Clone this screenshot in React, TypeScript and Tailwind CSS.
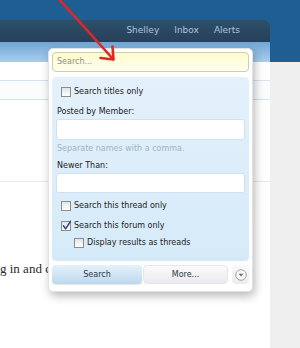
function Checkbox({ checked = false }: { checked?: boolean }) {
  return (
    <span className="relative inline-block h-[10px] w-[10px] shrink-0 border border-[#8c8c8c] bg-gradient-to-b from-[#e4e4e4] to-white">
      {checked && (
        <svg viewBox="0 0 10 10" className="absolute -left-px -top-[2px] h-[11px] w-[11px]">
          <path d="M2.2 5.2 L4.2 8 L8.6 1.2" fill="none" stroke="#2b3f7a" strokeWidth={1.3} strokeLinecap="round" strokeLinejoin="round" />
        </svg>
      )}
    </span>
  )
}

function CheckRow({ label, checked, indent }: { label: string; checked?: boolean; indent?: boolean }) {
  return (
    <label className={`flex h-[12px] items-center gap-[3px] text-[8px] leading-[12px] text-[#222] ${indent ? 'pl-[18px]' : 'pl-[5px]'}`}>
      <Checkbox checked={checked} />
      <span>{label}</span>
    </label>
  )
}

export default function App() {
  return (
    <div className="relative h-[348px] w-[300px] overflow-hidden bg-white font-['DejaVu_Sans',sans-serif]">
      {/* header */}
      <div className="h-[62px] bg-[#1e5e93] pt-[20px]">
        <div className="w-[270px] overflow-hidden rounded-tr-[7px]">
          <nav className="flex h-[22px] items-center justify-end gap-[15px] bg-gradient-to-b from-[#2f4f69] to-[#25405a] pr-[30px] text-[9px] text-[#a9c6df]">
            <span>Shelley</span>
            <span>Inbox</span>
            <span>Alerts</span>
          </nav>
          <div className="h-[20px] bg-gradient-to-b from-[#6fa6d4] to-[#aacdea]" />
        </div>
      </div>

      {/* body */}
      <div className="flex h-[286px]">
        <main className="w-[270px]">
          <div className="h-[18px]" />
          <div className="h-[20px] border-y border-[#d6e2ed] bg-[#fafcfe]" />
          <div className="h-[82px] border-b border-[#e3eaf0]" />
          <p className="whitespace-nowrap pt-[80px] font-['Liberation_Serif',serif] text-[13px] leading-[14px] text-[#2a2a2a]">
            g in and c
          </p>
        </main>
        <aside className="flex-1 bg-[#efefef]" />
      </div>

      {/* search dropdown */}
      <div className="absolute left-[48px] top-[48px] flex w-[205px] flex-col rounded-[5px] border border-[#e2e2e2] bg-white p-[3px] pb-[7px] shadow-[2px_4px_10px_rgba(0,0,0,0.28)]">
        <div className="flex h-[20px] items-center rounded-[4px] border border-[#cfcdb0] bg-gradient-to-b from-[#fdfbcc] to-[#fffff0] px-[4px] text-[8px] text-[#8e8e8e]">
          Search...
        </div>

        <div className="mt-[5px] flex flex-col rounded-[4px] bg-gradient-to-b from-[#e4f1fb] to-[#d5eaf8] px-[4px] pb-[12px] pt-[9px]">
          <CheckRow label="Search titles only" />
          <div className="mt-[8px] h-[12px] pl-[1px] text-[8px] leading-[12px] text-[#222]">Posted by Member:</div>
          <div className="mt-[1px] h-[21px] rounded-[3px] border border-[#cfe0ee] bg-white" />
          <div className="mt-[3px] h-[12px] pl-[1px] text-[8px] leading-[12px] text-[#9fb4c6]">Separate names with a comma.</div>
          <div className="mt-[5px] h-[12px] pl-[1px] text-[8px] leading-[12px] text-[#222]">Newer Than:</div>
          <div className="mt-[1px] h-[20px] rounded-[3px] border border-[#cfe0ee] bg-white" />
          <div className="mt-[7px]">
            <CheckRow label="Search this thread only" />
          </div>
          <div className="mt-[8px]">
            <CheckRow label="Search this forum only" checked />
          </div>
          <div className="mt-[5px]">
            <CheckRow label="Display results as threads" indent />
          </div>
        </div>

        <div className="mt-[4px] flex h-[19px] items-center gap-[1px]">
          <button className="flex h-full w-[90px] items-center justify-center rounded-[4px] bg-gradient-to-b from-[#e6f1fa] to-[#bbd8ee] text-[8px] text-[#2b3846] shadow-[0_1px_1px_rgba(0,0,0,0.1)]">
            Search
          </button>
          <button className="flex h-full w-[85px] items-center justify-center rounded-[4px] border border-[#e6e6ec] bg-gradient-to-b from-[#fcfcfc] to-[#e9e9f0] text-[8px] text-[#2b3846]">
            More...
          </button>
          <div className="ml-[3px] flex h-full w-[17px] items-center justify-center rounded-[4px] bg-gradient-to-b from-[#fafafa] to-[#ececf0]">
            <svg viewBox="0 0 12 12" className="h-[12px] w-[12px]">
              <circle cx="6" cy="6" r="5.3" fill="#f7f7f7" stroke="#9a9a9a" strokeWidth="0.9" />
              <path d="M3.6 4.8 H8.4 L6 7.6 Z" fill="#6a6a6a" />
            </svg>
          </div>
        </div>
      </div>

      {/* red arrow annotation */}
      <svg className="pointer-events-none absolute left-0 top-0 h-[348px] w-[300px]" viewBox="0 0 300 348">
        <g fill="none" stroke="#e12626" strokeWidth={2.6} strokeLinecap="round" strokeLinejoin="round">
          <path d="M58 -2 L113 59" />
          <path d="M112.5 46.5 L113.5 59.5 L100.5 58" />
        </g>
      </svg>
    </div>
  )
}
